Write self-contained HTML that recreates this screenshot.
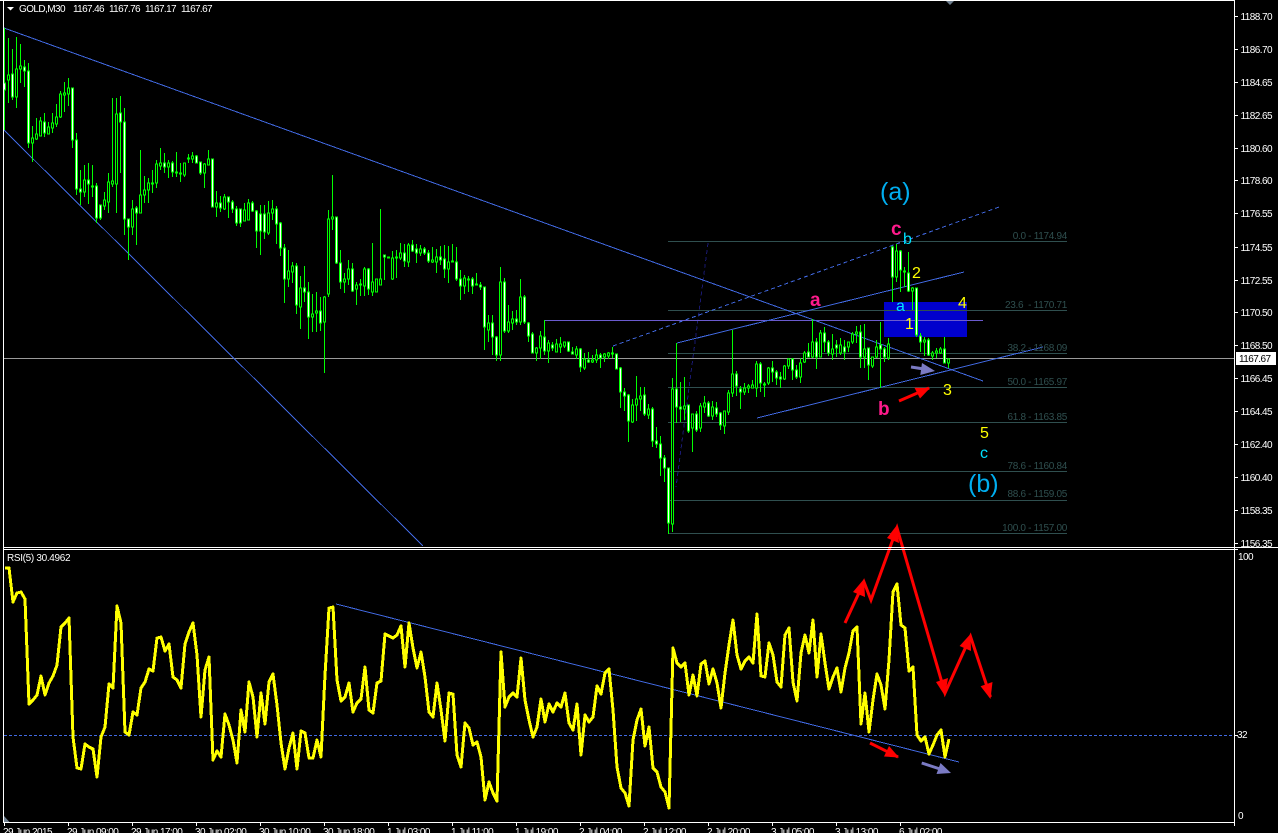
<!DOCTYPE html>
<html><head><meta charset="utf-8"><title>GOLD,M30</title>
<style>
html,body{margin:0;padding:0;background:#000;overflow:hidden;width:1278px;height:833px}
svg{display:block}
text{font-family:"Liberation Sans",Arial,sans-serif;font-size:10px;letter-spacing:-.55px;fill:#fff;white-space:pre}
.f{fill:#2f4f4f;text-anchor:end;letter-spacing:-.3px}
.pk{font-size:19px;font-weight:bold;fill:#ff1a8c;letter-spacing:0}
.cy{font-size:16px;fill:#00e0ff;letter-spacing:0}
.ye{font-size:16px;fill:#ffff00;letter-spacing:0}
.bg{font-size:25px;fill:#00aef0;letter-spacing:0}
</style></head><body>
<svg xmlns="http://www.w3.org/2000/svg" width="1278" height="833" viewBox="0 0 1278 833">
<rect width="1278" height="833" fill="#000"/>
<rect x="884" y="302" width="83" height="35" fill="#0000cd"/>
<g shape-rendering="crispEdges" fill="none">
<path stroke="#2f4f4f" d="M668 241.5H1067M668 310.5H1067M668 353.5H1067M668 387.5H1067M668 422.5H1067M668 471.5H1067M668 500.5H1067M668 533.5H1067"/>
<path stroke="#9a9a9a" d="M4 358.5H1234"/>
<path stroke="#191970" stroke-dasharray="4 3" d="M708 243L676 487"/>
<path stroke="#6a5acd" d="M544 320.5H983"/>
<path stroke="#4169e1" d="M4 28L983 381M4 130L423 546M677 343L964 272M757 418L1043 347M336 604L959 762"/>
<path stroke="#4169e1" stroke-dasharray="4 3" d="M613 346L999 207"/>
<path stroke="#4169e1" stroke-dasharray="3 2" d="M4 735.5H1234"/>
<path stroke="#00ff00" d="M4.5 28V130M8.5 38V103M12.5 49V100M16.5 37V108M20.5 44V83M24.5 60V87M28.5 63V148M32.5 126V162M36.5 118V140M40.5 117V136M44.5 113V137M48.5 122V134M52.5 113V133M56.5 104V127M60.5 91V118M64.5 82V112M68.5 78V106M72.5 88V148M76.5 133V195M80.5 170V205M84.5 165V197M88.5 163V204M92.5 165V197M96.5 183V223M100.5 205V220M104.5 192V210M108.5 173V213M112.5 98V187M116.5 98V213M120.5 96V173M124.5 108V235M128.5 219V260M132.5 200V235M136.5 206V245M140.5 150V213M144.5 176V203M148.5 178V203M152.5 170V193M156.5 160V188M160.5 148V170M164.5 153V173M168.5 160V178M172.5 161V177M176.5 152V177M180.5 163V182M184.5 163V177M188.5 154V163M192.5 152V163M196.5 155V163M200.5 162V175M204.5 163V188M208.5 150V165M212.5 159V207M216.5 191V217M220.5 196V212M224.5 194V210M228.5 197V218M232.5 200V213M236.5 206V226M240.5 209V227M244.5 203V221M248.5 199V220M252.5 201V212M256.5 210V248M260.5 205V255M264.5 205V239M268.5 201V235M272.5 200V220M276.5 206V244M280.5 222V256M284.5 244V303M288.5 250V287M292.5 262V283M296.5 263V314M300.5 276V329M304.5 266V302M308.5 282V339M312.5 294V332M316.5 292V332M320.5 297V331M324.5 296V373M328.5 210V297M332.5 175V230M336.5 217V264M340.5 250V289M344.5 273V293M348.5 260V285M352.5 263V292M356.5 282V305M360.5 279V296M364.5 267V296M368.5 268V295M372.5 243V296M376.5 279V292M380.5 209V285M384.5 255V280M388.5 257V258M392.5 251V280M396.5 250V278M400.5 243V260M404.5 244V267M408.5 243V267M412.5 240V252M416.5 244V263M420.5 245V256M424.5 247V255M428.5 250V263M432.5 247V263M436.5 249V273M440.5 246V265M444.5 245V278M448.5 246V283M452.5 244V262M456.5 247V281M460.5 270V300M464.5 275V294M468.5 276V292M472.5 277V294M476.5 273V285M480.5 282V290M484.5 287V350M488.5 315V342M492.5 315V355M496.5 336V361M500.5 267V361M504.5 278V333M508.5 305V333M512.5 311V330M516.5 310V325M520.5 279V325M524.5 295V324M528.5 322V342M532.5 332V353M536.5 347V361M540.5 331V359M544.5 320V355M548.5 340V363M552.5 342V351M556.5 339V352M560.5 337V353M564.5 342V348M568.5 342V352M572.5 347V353M576.5 346V359M580.5 348V372M584.5 353V370M588.5 352V363M592.5 355V363M596.5 349V363M600.5 353V368M604.5 353V362M608.5 352V359M612.5 347V358M616.5 354V369M620.5 367V408M624.5 388V411M628.5 394V442M632.5 399V423M636.5 376V421M640.5 387V411M644.5 387V416M648.5 404V419M652.5 407V447M656.5 427V448M660.5 436V476M664.5 455V482M668.5 468V534M672.5 378V532M676.5 343V423M680.5 382V422M684.5 377V420M688.5 405V433M692.5 414V452M696.5 411V432M700.5 403V432M704.5 396V413M708.5 401V417M712.5 401V420M716.5 402V417M720.5 412V430M724.5 411V434M728.5 390V415M732.5 330V397M736.5 371V396M740.5 386V409M744.5 383V395M748.5 384V393M752.5 380V388M756.5 361V397M760.5 362V392M764.5 382V397M768.5 367V385M772.5 361V382M776.5 370V385M780.5 372V388M784.5 365V380M788.5 358V369M792.5 358V380M796.5 365V379M800.5 358V383M804.5 351V363M808.5 343V357M812.5 319V358M816.5 338V369M820.5 330V357M824.5 327V352M828.5 340V356M832.5 334V360M836.5 340V357M840.5 338V355M844.5 340V360M848.5 342V352M852.5 332V344M856.5 326V343M860.5 325V368M864.5 324V368M868.5 348V380M872.5 357V368M876.5 340V358M880.5 322V388M884.5 347V362M888.5 338V360M892.5 246V302M896.5 244V282M900.5 250V292M904.5 267V287M908.5 252V292M912.5 287V310M916.5 288V337M920.5 333V352M924.5 337V356M928.5 338V356M932.5 351V360M936.5 348V358M940.5 347V354M944.5 337V363M948.5 358V368"/>
<path stroke="#00ff00" fill="#000" d="M7.5 75h2V80h-2zM15.5 69h2V97h-2zM19.5 66h2V69h-2zM31.5 138h2V143h-2zM35.5 134h2V139h-2zM39.5 121h2V136h-2zM47.5 127h2V134h-2zM51.5 123h2V128h-2zM55.5 117h2V124h-2zM59.5 94h2V117h-2zM63.5 93h2V95h-2zM67.5 88h2V94h-2zM83.5 180h2V192h-2zM91.5 186h2V187h-2zM103.5 200h2V206h-2zM107.5 182h2V202h-2zM111.5 181h2V184h-2zM115.5 114h2V184h-2zM131.5 209h2V227h-2zM139.5 195h2V213h-2zM143.5 190h2V195h-2zM147.5 183h2V190h-2zM151.5 183h2V184h-2zM155.5 164h2V183h-2zM159.5 163h2V166h-2zM167.5 163h2V167h-2zM175.5 172h2V173h-2zM179.5 173h2V174h-2zM183.5 163h2V175h-2zM187.5 158h2V159h-2zM191.5 156h2V159h-2zM203.5 164h2V173h-2zM207.5 159h2V165h-2zM215.5 203h2V207h-2zM223.5 197h2V209h-2zM243.5 210h2V221h-2zM247.5 203h2V220h-2zM267.5 213h2V233h-2zM271.5 209h2V213h-2zM287.5 271h2V279h-2zM291.5 266h2V272h-2zM299.5 288h2V307h-2zM311.5 314h2V317h-2zM315.5 311h2V313h-2zM323.5 297h2V322h-2zM327.5 219h2V294h-2zM331.5 217h2V219h-2zM343.5 279h2V282h-2zM347.5 269h2V279h-2zM355.5 285h2V289h-2zM359.5 284h2V285h-2zM363.5 269h2V286h-2zM371.5 282h2V292h-2zM375.5 279h2V292h-2zM379.5 279h2V285h-2zM391.5 258h2V279h-2zM395.5 257h2V258h-2zM399.5 253h2V258h-2zM407.5 245h2V262h-2zM419.5 249h2V253h-2zM431.5 260h2V262h-2zM435.5 257h2V262h-2zM447.5 262h2V269h-2zM451.5 261h2V262h-2zM463.5 278h2V286h-2zM467.5 279h2V280h-2zM475.5 284h2V285h-2zM487.5 323h2V330h-2zM499.5 282h2V355h-2zM507.5 322h2V331h-2zM511.5 319h2V323h-2zM519.5 297h2V322h-2zM535.5 348h2V353h-2zM539.5 336h2V348h-2zM547.5 343h2V351h-2zM555.5 344h2V352h-2zM559.5 344h2V347h-2zM563.5 342h2V346h-2zM575.5 349h2V355h-2zM583.5 359h2V368h-2zM591.5 360h2V362h-2zM595.5 355h2V360h-2zM603.5 354h2V357h-2zM607.5 353h2V356h-2zM611.5 353h2V354h-2zM631.5 405h2V422h-2zM635.5 399h2V405h-2zM639.5 396h2V399h-2zM647.5 409h2V415h-2zM671.5 389h2V524h-2zM683.5 406h2V409h-2zM691.5 414h2V428h-2zM699.5 406h2V428h-2zM703.5 403h2V407h-2zM711.5 407h2V416h-2zM723.5 411h2V426h-2zM727.5 393h2V412h-2zM731.5 374h2V393h-2zM743.5 388h2V392h-2zM747.5 386h2V388h-2zM751.5 385h2V388h-2zM755.5 364h2V388h-2zM763.5 384h2V385h-2zM767.5 368h2V383h-2zM783.5 366h2V379h-2zM787.5 359h2V366h-2zM799.5 363h2V377h-2zM803.5 353h2V362h-2zM811.5 342h2V357h-2zM819.5 333h2V357h-2zM831.5 349h2V354h-2zM839.5 345h2V353h-2zM847.5 342h2V347h-2zM851.5 334h2V342h-2zM855.5 332h2V334h-2zM863.5 349h2V357h-2zM871.5 357h2V366h-2zM875.5 347h2V357h-2zM887.5 344h2V358h-2zM895.5 251h2V277h-2zM903.5 271h2V272h-2zM911.5 288h2V291h-2zM923.5 340h2V342h-2zM931.5 353h2V356h-2zM935.5 351h2V353h-2zM939.5 349h2V353h-2zM947.5 359h2V363h-2z"/>
<path stroke="#00ff00" fill="#fff" d="M3.5 83h2V90h-2zM11.5 74h2V97h-2zM23.5 67h2V71h-2zM27.5 71h2V143h-2zM43.5 122h2V133h-2zM71.5 88h2V140h-2zM75.5 140h2V189h-2zM79.5 189h2V192h-2zM87.5 180h2V184h-2zM95.5 186h2V218h-2zM99.5 205h2V218h-2zM119.5 113h2V122h-2zM123.5 122h2V219h-2zM127.5 219h2V227h-2zM135.5 208h2V213h-2zM163.5 163h2V167h-2zM171.5 163h2V172h-2zM195.5 156h2V163h-2zM199.5 162h2V173h-2zM211.5 159h2V207h-2zM219.5 203h2V208h-2zM227.5 197h2V202h-2zM231.5 202h2V209h-2zM235.5 209h2V223h-2zM239.5 209h2V223h-2zM251.5 203h2V211h-2zM255.5 211h2V231h-2zM259.5 214h2V231h-2zM263.5 214h2V232h-2zM275.5 209h2V224h-2zM279.5 223h2V248h-2zM283.5 248h2V279h-2zM295.5 266h2V305h-2zM303.5 288h2V292h-2zM307.5 292h2V317h-2zM319.5 311h2V323h-2zM335.5 217h2V263h-2zM339.5 263h2V282h-2zM351.5 269h2V291h-2zM367.5 269h2V289h-2zM383.5 255h2V257h-2zM387.5 257h2V258h-2zM403.5 253h2V261h-2zM411.5 245h2V251h-2zM415.5 249h2V253h-2zM423.5 249h2V253h-2zM427.5 253h2V261h-2zM439.5 257h2V260h-2zM443.5 259h2V269h-2zM455.5 262h2V279h-2zM459.5 279h2V286h-2zM471.5 279h2V286h-2zM479.5 285h2V287h-2zM483.5 287h2V327h-2zM491.5 323h2V337h-2zM495.5 337h2V355h-2zM503.5 282h2V331h-2zM515.5 319h2V322h-2zM523.5 297h2V322h-2zM527.5 323h2V336h-2zM531.5 334h2V353h-2zM543.5 337h2V351h-2zM551.5 345h2V348h-2zM567.5 342h2V351h-2zM571.5 352h2V354h-2zM579.5 349h2V367h-2zM587.5 360h2V362h-2zM599.5 355h2V358h-2zM615.5 354h2V369h-2zM619.5 368h2V392h-2zM623.5 392h2V396h-2zM627.5 395h2V421h-2zM643.5 395h2V414h-2zM651.5 409h2V441h-2zM655.5 441h2V444h-2zM659.5 444h2V458h-2zM663.5 458h2V468h-2zM667.5 468h2V523h-2zM675.5 389h2V407h-2zM679.5 407h2V409h-2zM687.5 405h2V431h-2zM695.5 414h2V430h-2zM707.5 403h2V416h-2zM715.5 408h2V414h-2zM719.5 413h2V425h-2zM735.5 374h2V386h-2zM739.5 389h2V392h-2zM759.5 364h2V383h-2zM771.5 368h2V372h-2zM775.5 372h2V378h-2zM779.5 377h2V379h-2zM791.5 359h2V370h-2zM795.5 370h2V377h-2zM807.5 352h2V357h-2zM815.5 342h2V357h-2zM823.5 333h2V342h-2zM827.5 342h2V353h-2zM835.5 345h2V348h-2zM843.5 347h2V352h-2zM859.5 332h2V357h-2zM867.5 348h2V365h-2zM879.5 345h2V349h-2zM883.5 349h2V357h-2zM891.5 247h2V277h-2zM899.5 251h2V270h-2zM907.5 273h2V291h-2zM915.5 288h2V335h-2zM919.5 336h2V342h-2zM927.5 340h2V355h-2zM943.5 349h2V363h-2z"/>
<polyline stroke="#ffff00" stroke-width="3" stroke-linejoin="round" points="5,568 9,568 13,602 17,593 21,592 25,599 29,704 33,700 37,695 41,676 45,695 49,683 53,676 57,665 61,627 65,623 69,618 73,737 77,768 81,769 85,744 89,747 93,749 97,777 101,737 105,727 109,684 113,688 117,606 121,623 125,732 129,735 133,712 137,715 141,688 145,682 149,669 153,671 157,638 161,637 165,651 169,644 173,677 177,680 181,688 185,644 189,632 193,623 197,655 201,717 205,670 209,657 213,760 217,751 221,757 225,714 229,725 233,740 237,763 241,710 245,732 249,682 253,697 257,737 261,693 265,724 269,682 273,674 277,705 281,743 285,769 289,748 293,733 297,769 301,731 305,733 309,758 313,758 317,740 321,757 325,675 329,608 333,607 337,680 341,701 345,697 349,683 353,712 357,703 361,699 365,667 369,710 373,713 377,683 381,681 385,634 389,636 393,638 397,635 401,626 405,667 409,623 413,648 417,668 421,652 425,677 429,712 433,717 437,683 441,710 445,741 449,693 453,694 457,755 461,767 465,723 469,728 473,745 477,742 481,757 485,800 489,782 493,793 497,801 501,652 505,707 509,697 513,693 517,697 521,658 525,700 529,720 533,737 537,727 541,699 545,722 549,704 553,712 557,703 561,707 565,693 569,723 573,730 577,704 581,755 585,715 589,722 593,717 597,686 601,694 605,673 609,669 613,710 617,767 621,788 625,793 629,806 633,740 637,720 641,709 645,746 649,727 653,768 657,772 661,787 665,792 669,808 673,648 677,663 681,667 685,663 689,695 693,675 697,696 701,664 705,661 709,684 713,669 717,683 721,708 725,673 729,645 733,620 737,655 741,669 745,661 749,657 753,663 757,614 761,676 765,677 769,643 773,655 777,682 781,687 785,635 789,628 793,682 797,701 801,653 805,635 809,653 813,620 817,677 821,634 825,663 829,689 833,677 837,668 841,692 845,668 849,653 853,631 857,627 861,724 865,693 869,732 873,700 877,674 881,685 885,709 889,660 893,592 897,584 901,625 905,628 909,671 913,667 917,735 921,741 925,737 929,754 933,745 937,735 941,730 945,757 949,739"/>
</g>
<g fill="none" stroke-width="3" stroke="#ff0000">
<path d="M845 623L864 582L871 600L897 528L945 693L970.5 636.5L990.5 697"/>
<path d="M870 743L898 757"/>
<path d="M899 401L929 388"/>
</g>
<g fill="#ff0000">
<polygon points="864,579 865,597 853,592"/>
<polygon points="897,525 899,543 887,538"/>
<polygon points="945,696 948,678 936,682"/>
<polygon points="970.5,634 971,651 959.6,646"/>
<polygon points="990.5,699 992.5,682 980.6,686.2"/>
<polygon points="899,757.5 889,746 884,756.5"/>
<polygon points="930,388 920,398.5 914.5,387.8"/>
</g>
<path d="M921.7 763L940 769M911 367L924 369" stroke="#7b7bc4" stroke-width="3" fill="none"/>
<polygon fill="#7b7bc4" points="951,773 940.5,763 936.5,774"/>
<polygon fill="#7b7bc4" points="935,371 920.3,375 922,363"/>
<polygon fill="#708090" points="4,816 9.5,822 4,822"/>
<polygon fill="#708090" points="945,0 955,0 950,5"/>
<g shape-rendering="crispEdges" fill="none" stroke="#fff">
<path d="M3.5 0V822M0 0.5H1234.5M1234.5 0V826M3 547.5H1278M3 549.5H1238M3 822.5H1234.5"/>
<path d="M1235 16.5h3M1235 49.5h3M1235 82.5h3M1235 115.5h3M1235 148.5h3M1235 180.5h3M1235 213.5h3M1235 247.5h3M1235 280.5h3M1235 312.5h3M1235 345.5h3M1235 378.5h3M1235 411.5h3M1235 444.5h3M1235 477.5h3M1235 510.5h3M1235 543.5h3M1235 735.5h3M4.5 822V826M68.5 822V826M132.5 822V826M196.5 822V826M260.5 822V826M324.5 822V826M388.5 822V826M452.5 822V826M516.5 822V826M580.5 822V826M644.5 822V826M708.5 822V826M772.5 822V826M836.5 822V826M900.5 822V826"/>
</g>
<polygon fill="#fff" points="7,7 14,7 10.5,10.5"/>
<text x="19" y="12" textLength="46">GOLD,M30</text>
<text x="73" y="12" textLength="31">1167.46</text>
<text x="109" y="12" textLength="31">1167.76</text>
<text x="145" y="12" textLength="31">1167.17</text>
<text x="181" y="12" textLength="31">1167.67</text>
<text x="7" y="561" textLength="63">RSI(5) 30.4962</text>
<g>
<text x="1240.5" y="20">1188.70</text>
<text x="1240.5" y="53">1186.70</text>
<text x="1240.5" y="86">1184.65</text>
<text x="1240.5" y="119">1182.65</text>
<text x="1240.5" y="152">1180.60</text>
<text x="1240.5" y="184">1178.60</text>
<text x="1240.5" y="217">1176.55</text>
<text x="1240.5" y="251">1174.55</text>
<text x="1240.5" y="284">1172.55</text>
<text x="1240.5" y="316">1170.50</text>
<text x="1240.5" y="349">1168.50</text>
<text x="1240.5" y="382">1166.45</text>
<text x="1240.5" y="415">1164.45</text>
<text x="1240.5" y="448">1162.40</text>
<text x="1240.5" y="481">1160.40</text>
<text x="1240.5" y="514">1158.35</text>
<text x="1240.5" y="547">1156.35</text>
<rect x="1236" y="352" width="40" height="13" fill="#fff"/>
<text x="1239" y="362" style="fill:#000">1167.67</text>
<text x="1238" y="560">100</text>
<text x="1237" y="738">32</text>
<text x="1238" y="819">0</text>
</g>
<g>
<text x="3" y="835">29 Jun 2015</text>
<text x="67" y="835">29 Jun 09:00</text>
<text x="131" y="835">29 Jun 17:00</text>
<text x="195" y="835">30 Jun 02:00</text>
<text x="259" y="835">30 Jun 10:00</text>
<text x="323" y="835">30 Jun 18:00</text>
<text x="387" y="835">1 Jul 03:00</text>
<text x="451" y="835">1 Jul 11:00</text>
<text x="515" y="835">1 Jul 19:00</text>
<text x="579" y="835">2 Jul 04:00</text>
<text x="643" y="835">2 Jul 12:00</text>
<text x="707" y="835">2 Jul 20:00</text>
<text x="771" y="835">3 Jul 05:00</text>
<text x="835" y="835">3 Jul 13:00</text>
<text x="899" y="835">6 Jul 02:00</text>
</g>
<g>
<text class="f" x="1067" y="239">0.0 - 1174.94</text>
<text class="f" x="1067" y="308">23.6  - 1170.71</text>
<text class="f" x="1067" y="351">38.2 - 1168.09</text>
<text class="f" x="1067" y="385">50.0 - 1165.97</text>
<text class="f" x="1067" y="420">61.8 - 1163.85</text>
<text class="f" x="1067" y="469">78.6 - 1160.84</text>
<text class="f" x="1067" y="497">88.6 - 1159.05</text>
<text class="f" x="1067" y="531">100.0 - 1157.00</text>
</g>
<text class="bg" x="880" y="200">(a)</text>
<text class="bg" x="968" y="492">(b)</text>
<text class="pk" x="891" y="235">c</text>
<text class="pk" x="810" y="306">a</text>
<text class="pk" x="878" y="415">b</text>
<text class="cy" x="903" y="244">b</text>
<text class="cy" x="896" y="311">a</text>
<text class="cy" x="980" y="458">c</text>
<text class="ye" x="912" y="278">2</text>
<text class="ye" x="958" y="308">4</text>
<text class="ye" x="905" y="329">1</text>
<text class="ye" x="943" y="395">3</text>
<text class="ye" x="980" y="438">5</text>
</svg>
</body></html>
